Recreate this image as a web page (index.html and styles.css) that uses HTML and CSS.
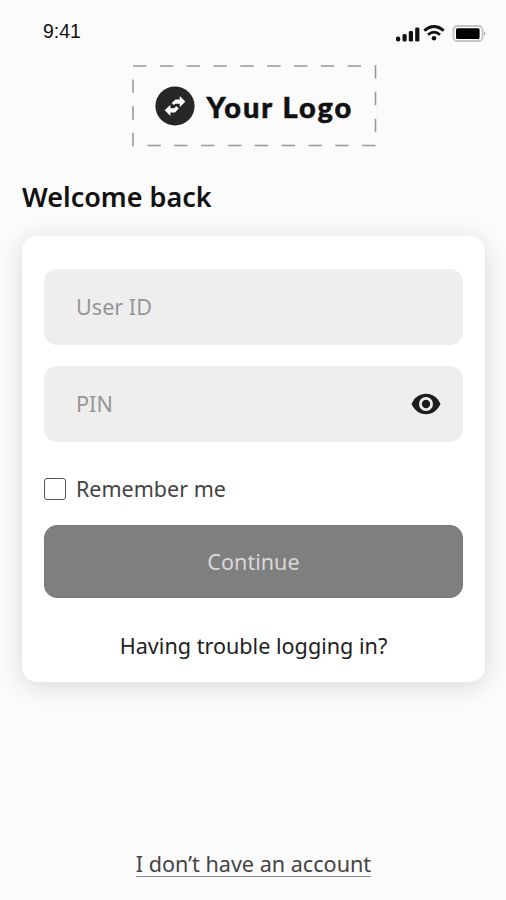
FILE: index.html
```html
<!DOCTYPE html>
<html lang="en">
<head>
    <meta charset="UTF-8">
    <meta name="viewport" content="width=device-width, initial-scale=1.0">
    <title>Welcome back</title>
    <link rel="stylesheet" href="styles.css">
</head>
<body>

<div class="screen">
    <!-- Status bar -->
    <div class="status-bar">
        <span class="time">9:41</span>
        <svg class="status-icons" width="92" height="20" viewBox="0 0 92 20">
            <g fill="#111">
                <rect x="2" y="12.5" width="4.2" height="5" rx="1.8"/>
                <rect x="8.5" y="10" width="4.2" height="7.5" rx="1.5"/>
                <rect x="14.8" y="7" width="4.2" height="10.5" rx="1.3"/>
                <rect x="21.2" y="3.5" width="4.2" height="14" rx="1.3"/>
                <circle cx="40" cy="14.3" r="2.3"/>
            </g>
            <g fill="none" stroke="#111" stroke-width="2.8">
                <path d="M30.3 6.6Q40-1.5 49.7 6.6"/>
                <path d="M34 10.7Q40 5.6 46 10.7"/>
            </g>
            <rect x="59.5" y="2" width="29" height="15" rx="3.5" fill="#fff" stroke="#c4c4c4" stroke-width="1.8"/>
            <rect x="62" y="4.2" width="23.6" height="10.8" rx="1.5" fill="#000"/>
            <path d="M90 7.5Q93 9.5 90 11.5Z" fill="#aaa"/>
        </svg>
    </div>

    <!-- Logo -->
    <div class="logo">
        <svg class="logo-frame" width="245" height="82" viewBox="0 0 245 82">
            <rect x="1" y="1" width="242.5" height="79.5"/>
        </svg>
        <svg class="logo-mark" width="40" height="40" viewBox="0 0 40 40">
            <circle cx="20" cy="20" r="19.6" fill="#262626"/>
            <g fill="#fff">
                <path d="M30.3 15.6L24.8 10V13.6H20.5L16.7 17L18.7 19L20.5 17.8H24.8V21.2Z"/>
                <path d="M9.7 24.3L15.4 18.7V22.2H19L21.3 20.3L23.8 22.6L20 26.4H15.4V29.9Z"/>
            </g>
        </svg>
        <span class="logo-text">Your Logo</span>
    </div>

    <h1>Welcome back</h1>

    <!-- Login form -->
    <form class="card">
        <div class="field">
            <input type="text" placeholder="User ID">
        </div>
        <div class="field">
            <input type="password" placeholder="PIN">
            <svg class="eye" width="30" height="22" viewBox="0 0 30 22">
                <path d="M.5 11C3.5 4.5 8.5 .8 15 .8S26.5 4.5 29.5 11C26.5 17.5 21.5 21.2 15 21.2S3.5 17.5 .5 11Z" fill="#1c1c1c"/>
                <circle cx="15" cy="11" r="5.6" fill="#1c1c1c" stroke="#eee" stroke-width="2.8"/>
            </svg>
        </div>
        <label class="remember">
            <input type="checkbox">
            <span>Remember me</span>
        </label>
        <button type="button">Continue</button>
        <a class="trouble" href="#">Having trouble logging in?</a>
    </form>

    <a class="signup" href="#">I don’t have an account</a>
</div>

</body>
</html>
```

FILE: styles.css
```css
* {
    box-sizing: border-box;
}
body {
    margin: 0;
    background-color: #fbfbfb;
    font-family: "Noto Sans", sans-serif;
    color: #222;
}
.screen {
    display: flex;
    flex-direction: column;
    width: 506px;
    height: 900px;
    padding: 0 21px 0 22px;
    overflow: hidden;
}
.status-bar {
    display: flex;
    justify-content: space-between;
    align-items: center;
    height: 65px;
    padding-left: 21px;
}
.time {
    font-family: "Liberation Sans", Arial, sans-serif;
    font-size: 19.5px;
    color: #111;
    margin-top: -2px;
}
.status-icons {
    margin-right: -1px;
    margin-top: 3px;
}
.logo {
    position: relative;
    display: flex;
    align-items: center;
    width: 245px;
    height: 82px;
    margin-left: 110px;
    padding-left: 22.5px;
}
.logo-frame {
    position: absolute;
    top: 0;
    left: 0;
}
.logo-frame rect {
    fill: none;
    stroke: #999;
    stroke-width: 1.6;
    stroke-dasharray: 13.417;
}
.logo-text {
    margin-left: 12px;
    font-family: Lato, sans-serif;
    font-size: 29px;
    font-weight: 900;
    letter-spacing: 1.95px;
    -webkit-text-stroke: 0.5px #111;
    color: #111;
    white-space: nowrap;
}
h1 {
    margin: 30px 0 0;
    font-size: 27px;
    font-weight: 600;
    line-height: 40px;
    color: #111;
}
.card {
    display: flex;
    flex-direction: column;
    height: 446px;
    margin-top: 19px;
    padding: 33px 22px 0;
    background-color: #fff;
    border-radius: 15px;
    box-shadow: 0 4px 24px rgba(0, 0, 0, 0.14);
}
.field {
    display: flex;
    align-items: center;
    height: 76px;
    margin-bottom: 21px;
    padding: 0 22px 0 32px;
    background-color: #eee;
    border-radius: 13px;
}
.field input {
    flex: 1;
    min-width: 0;
    padding: 0 0 2px;
    border: none;
    outline: none;
    background: none;
    font-family: inherit;
    font-size: 21.6px;
}
.field input::placeholder {
    color: #969696;
}
.remember {
    display: flex;
    align-items: center;
    height: 32px;
    margin-top: 10px;
    font-size: 21.5px;
    color: #444;
}
.remember span {
    padding-bottom: 2px;
}
.remember input {
    appearance: none;
    width: 22px;
    height: 22px;
    margin: 0 10px 0 0;
    border: 1.5px solid #555;
    border-radius: 3px;
    background-color: #fff;
}
button {
    height: 73px;
    margin-top: 20px;
    padding: 0;
    border: 1px solid #777;
    border-radius: 13px;
    background-color: #7f7f7f;
    font-family: inherit;
    font-size: 21.6px;
    color: #d8d8d8;
}
.trouble {
    margin-top: 32px;
    font-size: 21.6px;
    line-height: 32px;
    text-align: center;
    text-decoration: none;
    color: #222;
}
.signup {
    align-self: center;
    margin-top: 170px;
    border-bottom: 1.5px solid #888;
    font-size: 21.6px;
    line-height: 24px;
    text-decoration: none;
    color: #444;
}
```
